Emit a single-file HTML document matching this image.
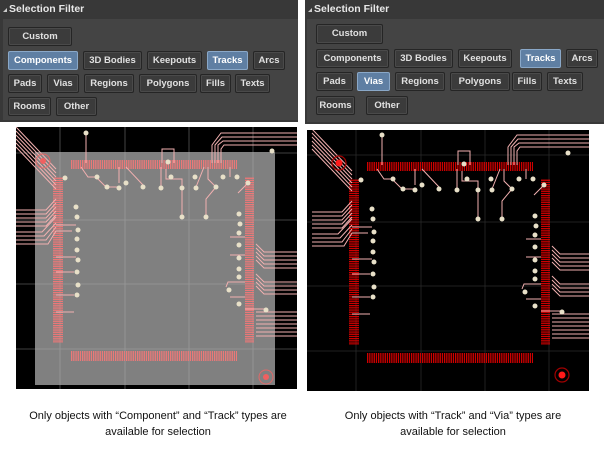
<!DOCTYPE html>
<html><head><meta charset="utf-8"><style>
*{margin:0;padding:0;box-sizing:border-box}
body{width:604px;height:455px;background:#fff;position:relative;overflow:hidden;font-family:"Liberation Sans",Arial,sans-serif}
.panel{position:absolute;top:0;height:122px;background:#383838}
.hdr{position:absolute;left:0;top:0;right:0;height:19px;color:#e8e8e8;font-weight:bold;font-size:10.5px;line-height:19px;padding-left:9px}
.hdr:before{content:"";position:absolute;left:3px;top:8px;border-left:4px solid transparent;border-bottom:4px solid #ccc}
.body{position:absolute;left:3px;top:19px;right:0;bottom:2px;background:#444}
.b{position:absolute;height:19px;background:#3b3b3b;border:1px solid #252525;border-radius:2px;color:#e0e0e0;font-size:9.5px;font-weight:bold;text-align:center;line-height:17px;box-shadow:inset 0 0 0 1px #4a4a4a;white-space:nowrap;overflow:hidden}
.b.s{background:#5f7fa3;border-color:#8aa8c8;box-shadow:none;color:#fff}
.cap{position:absolute;font-size:11px;color:#111;text-align:center;line-height:16px}
svg{position:absolute}
</style></head><body>

<div class="panel" style="left:0;width:298px">
<div class="hdr">Selection Filter</div>
<div class="body"></div>
<div class="b" style="left:8px;top:27px;width:64px">Custom</div>
<div class="b s" style="left:8px;top:51px;width:70px">Components</div>
<div class="b" style="left:83px;top:51px;width:59px">3D Bodies</div>
<div class="b" style="left:147px;top:51px;width:55px">Keepouts</div>
<div class="b s" style="left:207px;top:51px;width:41px">Tracks</div>
<div class="b" style="left:253px;top:51px;width:32px">Arcs</div>
<div class="b" style="left:8px;top:74px;width:34px">Pads</div>
<div class="b" style="left:47px;top:74px;width:32px">Vias</div>
<div class="b" style="left:84px;top:74px;width:50px">Regions</div>
<div class="b" style="left:139px;top:74px;width:58px">Polygons</div>
<div class="b" style="left:200px;top:74px;width:31px">Fills</div>
<div class="b" style="left:235px;top:74px;width:35px">Texts</div>
<div class="b" style="left:8px;top:97px;width:43px">Rooms</div>
<div class="b" style="left:56px;top:97px;width:41px">Other</div>
</div>

<div class="panel" style="left:305px;width:299px;height:124px">
<div class="hdr">Selection Filter</div>
<div class="body" style="left:2px"></div>
<div class="b" style="left:11px;top:24px;width:67px;height:20px">Custom</div>
<div class="b" style="left:11px;top:49px;width:73px">Components</div>
<div class="b" style="left:89px;top:49px;width:59px">3D Bodies</div>
<div class="b" style="left:153px;top:49px;width:54px">Keepouts</div>
<div class="b s" style="left:215px;top:49px;width:41px">Tracks</div>
<div class="b" style="left:261px;top:49px;width:32px">Arcs</div>
<div class="b" style="left:11px;top:72px;width:37px">Pads</div>
<div class="b s" style="left:52px;top:72px;width:33px">Vias</div>
<div class="b" style="left:90px;top:72px;width:50px">Regions</div>
<div class="b" style="left:145px;top:72px;width:60px">Polygons</div>
<div class="b" style="left:207px;top:72px;width:30px">Fills</div>
<div class="b" style="left:242px;top:72px;width:36px">Texts</div>
<div class="b" style="left:11px;top:96px;width:39px">Rooms</div>
<div class="b" style="left:61px;top:96px;width:42px">Other</div>
</div>

<svg width="0" height="0">
<defs>
<pattern id="phA" width="2.2" height="10" patternUnits="userSpaceOnUse"><rect width="1.3" height="10" fill="#ec7878"/></pattern>
<pattern id="pvA" width="10" height="2.2" patternUnits="userSpaceOnUse"><rect width="10" height="1.3" fill="#ec7878"/></pattern>
<pattern id="phB" width="2.2" height="10" patternUnits="userSpaceOnUse"><rect width="1.3" height="10" fill="#d00000"/></pattern>
<pattern id="pvB" width="10" height="2.2" patternUnits="userSpaceOnUse"><rect width="10" height="1.3" fill="#d00000"/></pattern>
<g id="grid" stroke="#555" stroke-width="0.8">
<line x1="44" y1="0" x2="44" y2="262"/><line x1="109" y1="0" x2="109" y2="262"/><line x1="173" y1="0" x2="173" y2="262"/><line x1="237" y1="0" x2="237" y2="262"/>
<line x1="0" y1="26" x2="282" y2="26"/><line x1="0" y1="93" x2="282" y2="93"/><line x1="0" y1="157" x2="282" y2="157"/><line x1="0" y1="222" x2="282" y2="222"/>
</g>
<g id="trk">
<g stroke="#f2b0b0" stroke-width="1" fill="none">
<path d="M0 0 L40 42 M0 4 L40 46 M0 8 L40 50 M0 12 L40 54 M0 16 L40 58 M0 20 L40 62"/>
<path d="M0 83 H30 L40 72 M0 87 H30 L40 76 M0 91 H30 L40 80 M0 95 H30 L40 84 M0 99 H30 L40 88"/>
<path d="M0 105 H26 L40 90 M0 109 H28 L40 96 M0 113 H30 L40 100 M0 117 H32 L40 104"/>
<path d="M282 125 H248 L240 117 M282 129 H248 L240 121 M282 133 H248 L240 125 M282 137 H248 L240 129 M282 141 H248 L240 133"/>
<path d="M282 155 H248 L240 147 M282 159 H248 L240 151 M282 163 H248 L240 155 M282 167 H248 L240 159"/>
<path d="M282 185 H240 M282 189 H240 M282 193 H240 M282 197 H240 M282 201 H240 M282 205 H240 M282 209 H240"/>
<path d="M282 6 H205 L196 18 V36 M282 10 H206 L199 18 V36 M282 14 H207 L202 18 V36 M282 18 H208 L205 22 V36"/>
<path d="M70 6 V36 M65 40 L72 50 H80 L90 60 H103 M103 40 V56 M110 40 L127 58 M146 36 V22 H158 V36 M145 40 V60 M150 42 V52 H166 V90 M192 40 V52 L200 60 L190 72 V90 M188 40 L180 60 M214 40 V50 M232 56 L222 66 M40 98 H60 M40 104 H56 M40 130 H60 M40 145 H58 M40 168 H58 M40 185 H58 M229 110 H214 M229 128 H214 M229 155 H212 L210 160 M229 170 H214 M229 182 H233 H250"/>
</g>
<g fill="#e8e0c8">
<circle cx="70" cy="6" r="2.5"/><circle cx="256" cy="24" r="2.5"/><circle cx="232" cy="56" r="2.5"/>
<circle cx="49" cy="51" r="2.5"/><circle cx="81" cy="50" r="2.5"/><circle cx="91" cy="60" r="2.5"/><circle cx="103" cy="61" r="2.5"/><circle cx="110" cy="56" r="2.5"/><circle cx="127" cy="60" r="2.5"/>
<circle cx="145" cy="61" r="2.5"/><circle cx="152" cy="35" r="2.5"/><circle cx="166" cy="61" r="2.5"/><circle cx="166" cy="90" r="2.5"/><circle cx="180" cy="61" r="2.5"/><circle cx="200" cy="60" r="2.5"/><circle cx="190" cy="90" r="2.5"/><circle cx="207" cy="50" r="2.5"/><circle cx="221" cy="50" r="2.5"/><circle cx="179" cy="50" r="2.5"/><circle cx="155" cy="50" r="2.5"/>
<circle cx="60" cy="80" r="2.5"/><circle cx="61" cy="90" r="2.5"/><circle cx="62" cy="103" r="2.5"/><circle cx="61" cy="112" r="2.5"/><circle cx="61" cy="123" r="2.5"/><circle cx="62" cy="133" r="2.5"/><circle cx="61" cy="145" r="2.5"/><circle cx="62" cy="158" r="2.5"/><circle cx="61" cy="168" r="2.5"/>
<circle cx="223" cy="87" r="2.5"/><circle cx="224" cy="97" r="2.5"/><circle cx="223" cy="106" r="2.5"/><circle cx="223" cy="118" r="2.5"/><circle cx="223" cy="131" r="2.5"/><circle cx="223" cy="142" r="2.5"/><circle cx="223" cy="150" r="2.5"/><circle cx="213" cy="163" r="2.5"/><circle cx="223" cy="177" r="2.5"/><circle cx="250" cy="183" r="2.5"/>
</g>
</g>
</defs>
</svg>

<svg style="left:16px;top:127px" width="281" height="262" viewBox="0 0 281 262">
<rect width="281" height="262" fill="#000"/>
<use href="#grid"/>
<rect x="19" y="25" width="240" height="233" fill="#808080"/>
<g stroke="#999" stroke-width="0.8"><line x1="44" y1="25" x2="44" y2="258"/><line x1="109" y1="25" x2="109" y2="258"/><line x1="173" y1="25" x2="173" y2="258"/><line x1="237" y1="25" x2="237" y2="258"/><line x1="19" y1="93" x2="259" y2="93"/><line x1="19" y1="157" x2="259" y2="157"/><line x1="19" y1="222" x2="259" y2="222"/></g>
<rect x="55" y="33" width="166" height="9" fill="url(#phA)"/>
<rect x="55" y="224" width="166" height="10" fill="url(#phA)"/>
<rect x="37" y="50" width="10" height="166" fill="url(#pvA)"/>
<rect x="229" y="50" width="9" height="166" fill="url(#pvA)"/>
<use href="#trk"/>
<g fill="none" stroke="#e06868"><circle cx="27" cy="34" r="7"/><circle cx="250" cy="250" r="7"/></g>
<circle cx="27" cy="34" r="3" fill="#f06060"/><circle cx="250" cy="250" r="3" fill="#f06060"/>
</svg>

<svg style="left:307px;top:130px" width="282" height="261" viewBox="0 0 282 261">
<rect width="282" height="261" fill="#000"/>
<g transform="translate(5,-1)">
<g stroke="#2a2a2a" stroke-width="0.8"><line x1="44" y1="0" x2="44" y2="262"/><line x1="109" y1="0" x2="109" y2="262"/><line x1="173" y1="0" x2="173" y2="262"/><line x1="237" y1="0" x2="237" y2="262"/><line x1="-5" y1="26" x2="282" y2="26"/><line x1="-5" y1="93" x2="282" y2="93"/><line x1="-5" y1="157" x2="282" y2="157"/><line x1="-5" y1="222" x2="282" y2="222"/></g>
<rect x="55" y="33" width="166" height="9" fill="url(#phB)"/>
<rect x="55" y="224" width="166" height="10" fill="url(#phB)"/>
<rect x="37" y="50" width="10" height="166" fill="url(#pvB)"/>
<rect x="229" y="50" width="9" height="166" fill="url(#pvB)"/>
<use href="#trk"/>
</g>
<g fill="none" stroke="#a00000" stroke-width="1.2"><circle cx="32" cy="33" r="7"/><circle cx="255" cy="245" r="7"/></g>
<circle cx="32" cy="33" r="3.5" fill="#ff1a1a"/><circle cx="255" cy="245" r="3.5" fill="#ff1a1a"/>
</svg>

<div class="cap" style="left:0;width:316px;top:408px">Only objects with “Component” and “Track” types are<br>available for selection</div>
<div class="cap" style="left:305px;width:296px;top:408px">Only objects with “Track” and “Via” types are<br>available for selection</div>
</body></html>
